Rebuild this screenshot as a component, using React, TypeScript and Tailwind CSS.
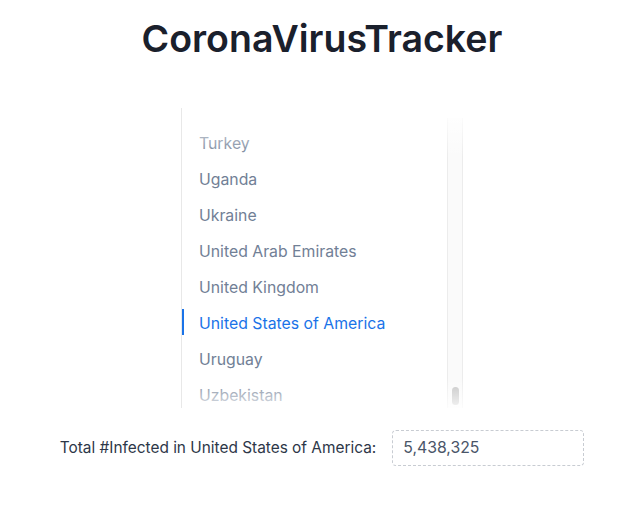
import React from "react";

const countries = [
  "Turkey",
  "Uganda",
  "Ukraine",
  "United Arab Emirates",
  "United Kingdom",
  "United States of America",
  "Uruguay",
  "Uzbekistan",
];

export default function App() {
  const selected = "United States of America";
  return (
    <div
      className="w-full min-h-[520px] bg-white pl-[17px]"
      style={{ fontFamily: "Inter, 'Noto Sans', sans-serif" }}
    >
      <h1 className="pt-[17px] text-center text-[37.5px] font-semibold leading-[44px] text-[#1a202c]">
        CoronaVirusTracker
      </h1>
      <div className="mt-[47px] flex justify-center">
        <div className="relative flex h-[300px] w-[282px]">
          <div className="flex-1 overflow-hidden border-l border-[#e8e8e8] pt-[18px]">
            {countries.map((c) => (
              <div
                key={c}
                className={
                  "relative flex h-[36px] items-center pl-[17px] text-[15.8px] " +
                  (c === selected ? "text-[#1a73e8]" : "text-[#718096]")
                }
              >
                {c === selected && (
                  <span className="absolute left-[0px] top-[3px] h-[26px] w-[2px] bg-[#1a73e8]" />
                )}
                {c}
              </div>
            ))}
          </div>
          <div className="relative ml-[0px] mt-[10px] w-[16px] border-x border-[#ececec] bg-[#fafafa]">
            <div className="absolute bottom-[3px] left-[4px] h-[18px] w-[7px] rounded-full bg-[#c2c2c2]" />
          </div>
          <div className="pointer-events-none absolute left-[1px] right-0 top-0 h-[50px] bg-gradient-to-b from-white to-transparent" />
          <div className="pointer-events-none absolute bottom-0 left-[1px] right-0 h-[30px] bg-gradient-to-t from-white/80 to-transparent" />
        </div>
      </div>
      <div className="mt-[22px] flex items-center justify-center gap-[16px]">
        <span className="text-[15.4px] text-[#2d3748]">
          Total #Infected in United States of America:
        </span>
        <div className="flex h-[36px] w-[192px] items-center rounded-[4px] border border-dashed border-[#c8ccd2] px-[10px] text-[15.8px] text-[#4a5568]">
          5,438,325
        </div>
      </div>
    </div>
  );
}
